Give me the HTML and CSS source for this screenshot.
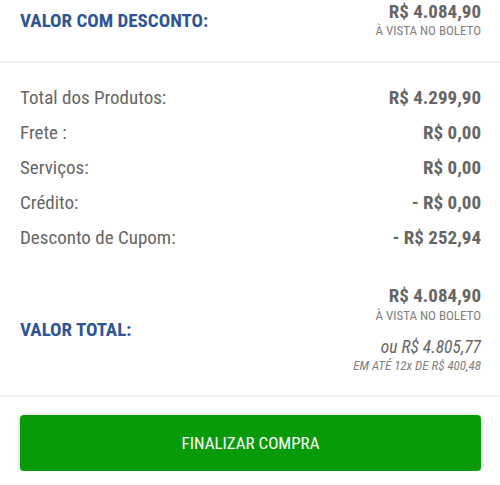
FILE: index.html
```html
<!DOCTYPE html>
<html lang="pt-BR">

<head>
    <meta charset="UTF-8">
    <meta name="viewport" content="width=device-width, initial-scale=1.0">
    <title>Resumo do pedido</title>
    <link rel="stylesheet" href="styles.css">
</head>

<body>
    <div class="resumo">
        <!-- valor com desconto -->
        <div class="bloco bloco-topo">
            <span class="titulo">VALOR COM DESCONTO:</span>
            <div class="valores">
                <div class="preco">R$ 4.084,90</div>
                <div class="obs">À VISTA NO BOLETO</div>
            </div>
        </div>

        <!-- itens -->
        <div class="itens">
            <div class="linha"><span>Total dos Produtos:</span><b>R$ 4.299,90</b></div>
            <div class="linha"><span>Frete :</span><b>R$ 0,00</b></div>
            <div class="linha"><span>Serviços:</span><b>R$ 0,00</b></div>
            <div class="linha"><span>Crédito:</span><b>- R$ 0,00</b></div>
            <div class="linha"><span>Desconto de Cupom:</span><b>- R$ 252,94</b></div>
        </div>

        <!-- valor total -->
        <div class="bloco bloco-total">
            <span class="titulo">VALOR TOTAL:</span>
            <div class="valores">
                <div class="preco">R$ 4.084,90</div>
                <div class="obs">À VISTA NO BOLETO</div>
                <div class="parcelado">ou R$ 4.805,77</div>
                <div class="parcelas">EM ATÉ 12x DE R$ 400,48</div>
            </div>
        </div>

        <div class="acoes">
            <button class="btn-finalizar">FINALIZAR COMPRA</button>
        </div>
    </div>
</body>

</html>
```

FILE: styles.css
```css
* {
    margin: 0;
    padding: 0;
    box-sizing: border-box;
}

body {
    font-family: 'Roboto Condensed', 'Roboto', sans-serif;
    background-color: #ffffff;
    color: #666666;
}

/* blocos de valor */
.bloco {
    display: flex;
    justify-content: space-between;
    padding: 0 19px 0 20px;
    border-bottom: 2px solid #f0f0f0;
}

.bloco-topo {
    align-items: flex-start;
    padding-top: 1px;
    padding-bottom: 23px;
}

.bloco-topo .titulo {
    margin-top: 9px;
}

.bloco-total {
    align-items: center;
    padding-top: 30px;
    padding-bottom: 22px;
}

.bloco-total .titulo {
    padding-top: 2px;
}

.titulo {
    font-size: 19px;
    line-height: 22px;
    font-weight: bold;
    color: #2e5596;
}

.valores {
    text-align: right;
}

.preco {
    font-size: 19px;
    line-height: 22px;
    font-weight: bold;
}

.obs {
    font-size: 13px;
    line-height: 15px;
    color: #808080;
}

.bloco-total .obs {
    margin-top: 1px;
}

.parcelado {
    font-size: 17.5px;
    line-height: 21px;
    font-style: italic;
    margin-top: 14px;
}

.parcelas {
    font-size: 13px;
    line-height: 15px;
    font-style: italic;
    color: #808080;
}

/* linhas de itens */
.itens {
    padding: 17px 19px 0 20px;
}

.linha {
    display: flex;
    justify-content: space-between;
    font-size: 19px;
    line-height: 35px;
}

/* botão */
.acoes {
    padding: 18px 19px 0 20px;
}

.btn-finalizar {
    width: 100%;
    height: 56px;
    border: none;
    border-radius: 4px;
    background-color: #079a09;
    color: #ffffff;
    font-family: inherit;
    font-size: 17px;
    box-shadow: 0 1px 4px rgba(0, 0, 0, 0.25);
    cursor: pointer;
}
```
